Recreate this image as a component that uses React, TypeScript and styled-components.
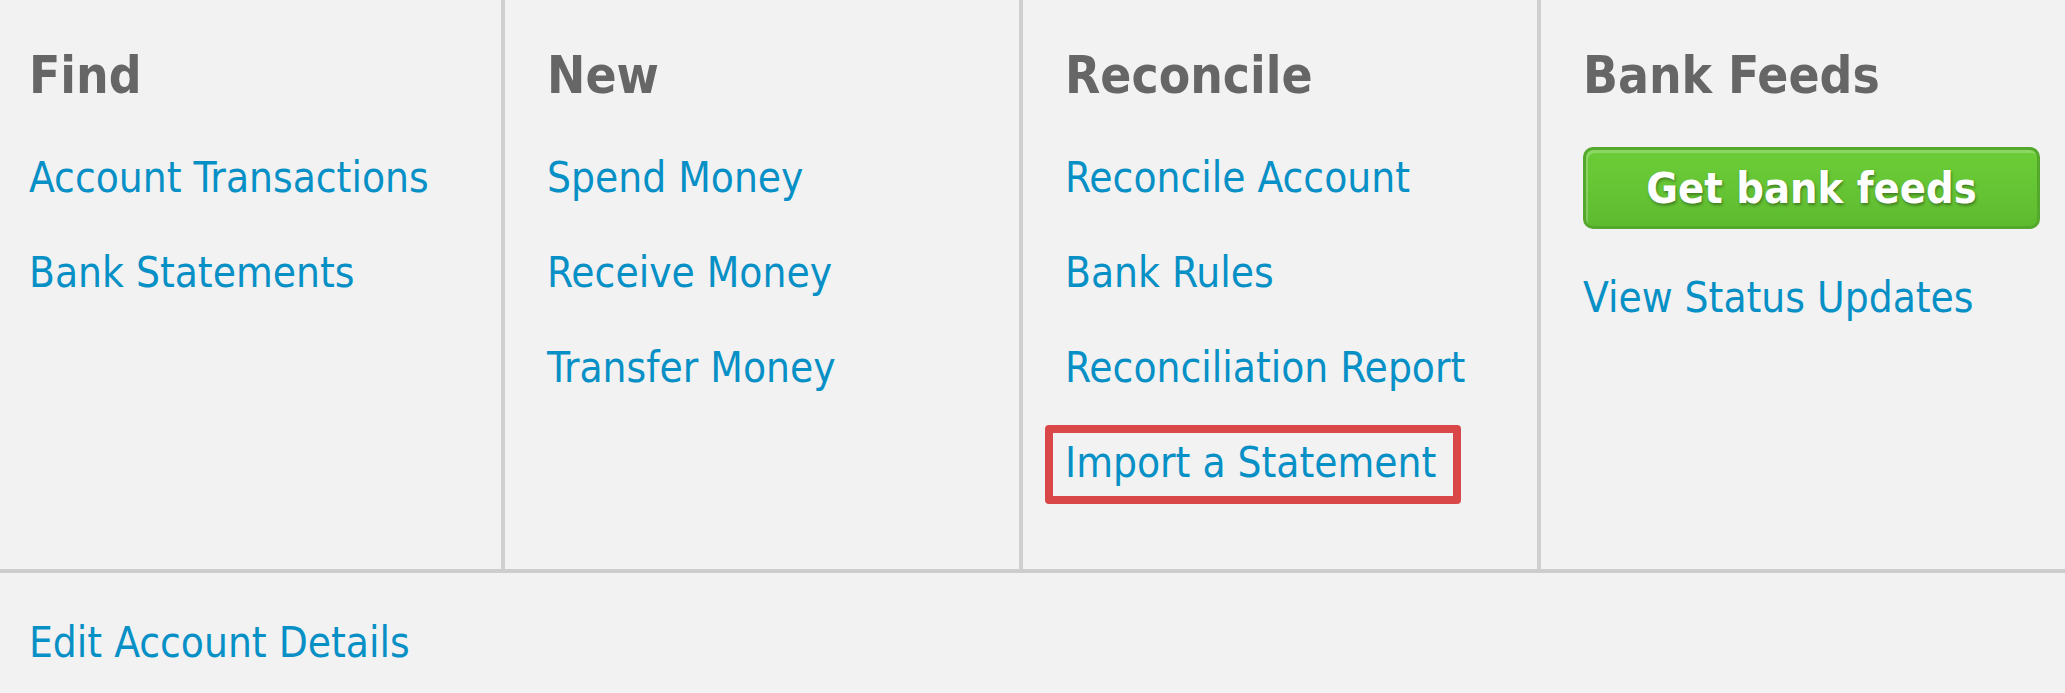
import React from "react";
import styled, { createGlobalStyle, css } from "styled-components";

const GlobalStyle = createGlobalStyle`
  html, body {
    margin: 0;
    padding: 0;
    background: #f2f2f2;
  }
  body {
    font-family: "DejaVu Sans Condensed", "DejaVu Sans", "Liberation Sans", sans-serif;
    font-stretch: condensed;
  }
`;

const Panel = styled.div`
  width: 2065px;
  height: 693px;
  background: #f2f2f2;
  display: flex;
  flex-direction: column;
`;

const Columns = styled.div`
  display: grid;
  grid-template-columns: 501px 518px 518px 1fr;
  height: 569px;
  border-bottom: 4px solid #cdcdcd;
`;

const Column = styled.div<{ $first?: boolean }>`
  padding: 46px 0 0 ${(p) => (p.$first ? "29px" : "42px")};
  border-left: ${(p) => (p.$first ? "none" : "4px solid #cfcfcf")};
  display: flex;
  flex-direction: column;
  align-items: flex-start;
`;

const Heading = styled.h2`
  margin: 0 0 24px;
  font-size: 51px;
  line-height: 60px;
  font-weight: bold;
  color: #666666;
  white-space: nowrap;
`;

const Item = styled.div<{ $highlight?: boolean }>`
  font-size: 42px;
  line-height: 95px;
  white-space: nowrap;
  ${(p) =>
    p.$highlight &&
    css`
      position: relative;
      &::after {
        content: "";
        position: absolute;
        left: -20px;
        right: -25px;
        top: 10px;
        bottom: 6px;
        border: 8px solid #d94749;
        border-radius: 4px;
        pointer-events: none;
      }
    `}
`;

const Link = styled.a`
  color: #0790c6;
  text-decoration: none;
  cursor: pointer;
`;

const FeedButton = styled.button`
  margin: 17px 0 21px;
  width: 457px;
  height: 82px;
  box-sizing: border-box;
  border: 3px solid #54a82b;
  border-radius: 10px;
  background: linear-gradient(to bottom, #6bcc37 0%, #66c534 50%, #5dba2f 100%);
  box-shadow: inset 2px 3px 0 rgba(255, 255, 255, 0.22);
  color: #ffffff;
  font-family: inherit;
  font-stretch: condensed;
  font-size: 43px;
  font-weight: bold;
  text-shadow: 1px 2px 3px rgba(0, 0, 0, 0.35);
  cursor: pointer;
  padding: 0;
  display: flex;
  align-items: center;
  justify-content: center;
`;

const Footer = styled.div`
  flex: 1;
  padding: 22px 0 0 29px;
`;

const columns = [
  { title: "Find", links: ["Account Transactions", "Bank Statements"] },
  { title: "New", links: ["Spend Money", "Receive Money", "Transfer Money"] },
  {
    title: "Reconcile",
    links: ["Reconcile Account", "Bank Rules", "Reconciliation Report", "Import a Statement"],
    highlight: "Import a Statement",
  },
];

export default function App() {
  return (
    <>
      <GlobalStyle />
      <Panel>
        <Columns>
          {columns.map((col, i) => (
            <Column key={col.title} $first={i === 0}>
              <Heading>{col.title}</Heading>
              {col.links.map((l) => (
                <Item key={l} $highlight={col.highlight === l}>
                  <Link>{l}</Link>
                </Item>
              ))}
            </Column>
          ))}
          <Column>
            <Heading>Bank Feeds</Heading>
            <FeedButton>Get bank feeds</FeedButton>
            <Item>
              <Link>View Status Updates</Link>
            </Item>
          </Column>
        </Columns>
        <Footer>
          <Item>
            <Link>Edit Account Details</Link>
          </Item>
        </Footer>
      </Panel>
    </>
  );
}
